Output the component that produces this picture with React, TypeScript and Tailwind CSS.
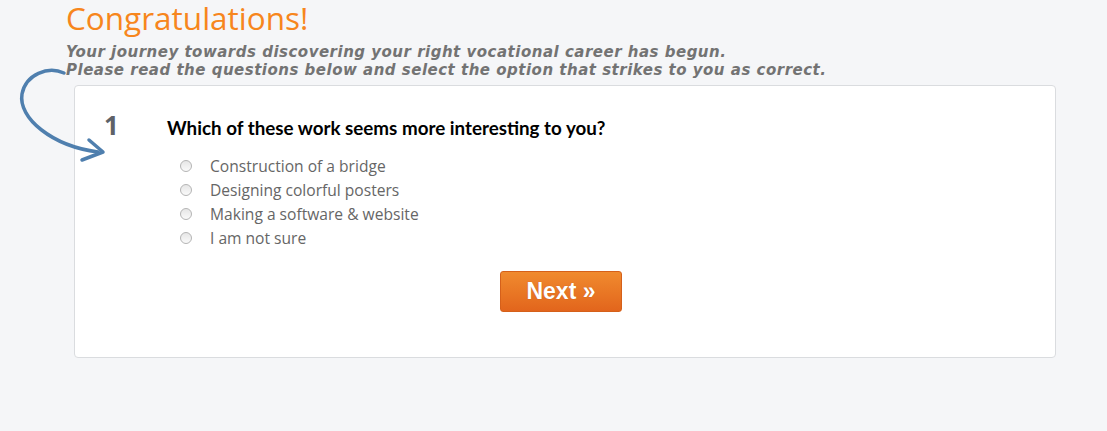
import React from "react";

const options = [
  "Construction of a bridge",
  "Designing colorful posters",
  "Making a software & website",
  "I am not sure",
];

function Arrow() {
  return (
    <svg
      className="absolute left-0 top-0 pointer-events-none"
      width="120"
      height="170"
      viewBox="0 0 120 170"
    >
      <path
        d="M64,73 C48,66 26,74 22,94 C18,118 52,146 98,152"
        fill="none"
        stroke="#4f7fae"
        strokeWidth="3.5"
        strokeLinecap="round"
      />
      <path
        d="M89,140 L103,152 L82,160"
        fill="none"
        stroke="#4f7fae"
        strokeWidth="3.5"
        strokeLinecap="round"
        strokeLinejoin="round"
      />
    </svg>
  );
}

function Radio() {
  return (
    <span className="inline-block w-[12px] h-[12px] rounded-full border border-[#b4b4b4] bg-gradient-to-b from-[#e6e6e6] to-[#fafafa] shrink-0" />
  );
}

export default function App() {
  return (
    <div className="relative w-[1107px] h-[431px] bg-[#f5f6f8] overflow-hidden">
      <Arrow />
      <div className="pl-[66px] pt-px">
        <h1 className="-mt-[5px] text-[31.5px] leading-[44px] text-[#f7861d] font-normal [font-family:'Open_Sans',sans-serif]">
          Congratulations!
        </h1>
        <p className="mt-[3px] text-[15px] leading-[18px] tracking-[0.5px] font-bold italic text-[#737373] [font-family:'DejaVu_Sans',Verdana,sans-serif]">
          Your journey towards discovering your right vocational career has begun.
          <br />
          Please read the questions below and select the option that strikes to you as correct.
        </p>
      </div>
      <div className="ml-[74px] mt-[6px] w-[982px] h-[273px] bg-white border border-[#dadcdf] rounded-[4px]">
        <div className="flex">
          <div className="pl-[29px] pt-[24px] w-[92px] text-[26px] leading-[30px] font-bold text-[#5e6268] [font-family:'Open_Sans',sans-serif]">
            1
          </div>
          <div className="pt-[31px]">
            <div className="text-[18.8px] leading-[22px] font-bold text-black [font-family:Lato,sans-serif]">
              Which of these work seems more interesting to you?
            </div>
            <div className="mt-[15px] pl-[13px] flex flex-col">
              {options.map((o) => (
                <label
                  key={o}
                  className="flex items-center h-[24px] text-[15.6px] leading-[24px] text-[#666666] [font-family:'Open_Sans',sans-serif]"
                >
                  <Radio />
                  <span className="ml-[18px]">{o}</span>
                </label>
              ))}
            </div>
          </div>
        </div>
        <div className="mt-[21px] flex justify-center pr-[8px]">
          <button className="w-[122px] h-[41px] rounded-[3px] border border-[#d5601a] bg-gradient-to-b from-[#f08a2e] to-[#e2651c] text-white text-[23px] font-bold [font-family:'Liberation_Sans',Arial,sans-serif] [text-shadow:0_0_1px_rgba(120,40,0,0.4)]">
            Next »
          </button>
        </div>
      </div>
    </div>
  );
}
